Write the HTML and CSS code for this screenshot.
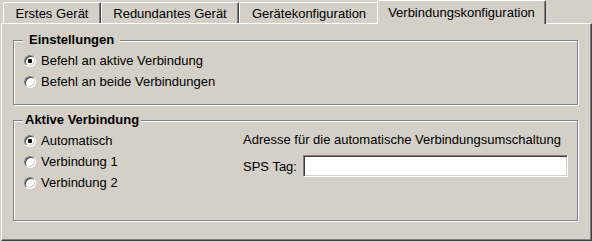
FILE: index.html
```html
<!DOCTYPE html>
<html lang="de">
<head>
  <meta charset="UTF-8" />
  <title>Verbindungskonfiguration</title>
  <link rel="stylesheet" href="styles.css">
</head>
<body>
  <div class="dialog">
    <div class="tabs">
      <div class="tab tab-first">Erstes Gerät</div>
      <div class="tab tab-redundant">Redundantes Gerät</div>
      <div class="tab tab-config">Gerätekonfiguration</div>
      <div class="tab tab-connection active">Verbindungskonfiguration</div>
    </div>

    <div class="panel">
      <div class="group">
        <div class="legend legend-wide">Einstellungen</div>
        <div class="group-body">
          <div class="options">
            <label class="option"><input type="radio" name="command" checked>Befehl an aktive Verbindung</label>
            <label class="option"><input type="radio" name="command">Befehl an beide Verbindungen</label>
          </div>
        </div>
      </div>

      <div class="group group-connection">
        <div class="legend">Aktive Verbindung</div>
        <div class="group-body">
          <div class="options modes">
            <label class="option"><input type="radio" name="mode" checked>Automatisch</label>
            <label class="option"><input type="radio" name="mode">Verbindung 1</label>
            <label class="option"><input type="radio" name="mode">Verbindung 2</label>
          </div>
          <div class="address">
            <div>Adresse für die automatische Verbindungsumschaltung</div>
            <div class="tag-row">
              <label for="sps-tag">SPS Tag:</label>
              <input type="text" id="sps-tag">
            </div>
          </div>
        </div>
      </div>
    </div>
  </div>
</body>
</html>
```

FILE: styles.css
```css
* {
  margin: 0;
  padding: 0;
  box-sizing: border-box;
}
body {
  background-color: #d4d0c8;
  color: #000;
  font-family: "Liberation Sans", Arial, sans-serif;
  font-size: 13px;
  line-height: 15px;
}
.dialog {
  padding-left: 1px;
}

/* tab strip */
.tabs {
  display: flex;
  align-items: flex-end;
  height: 23px;
  padding-left: 2px;
}
.tab {
  height: 21px;
  padding-top: 3px;
  text-align: center;
  white-space: nowrap;
  background: #d4d0c8;
  border: 1px solid;
  border-bottom: none;
  border-color: #fff #404040 transparent #fff;
  border-radius: 2px 2px 0 0;
  box-shadow: inset -1px 0 #808080;
}
.tab-first {
  width: 98px;
}
.tab-redundant {
  width: 138px;
}
.tab-config {
  width: 140px;
}
.tab-connection {
  width: 165px;
}
.tab.active {
  width: 169px;
  height: 24px;
  padding-top: 4px;
  margin: 0 -2px -1px;
  position: relative;
  z-index: 1;
}

/* page */
.panel {
  height: 218px;
  padding: 16px 13px 0 11px;
  border: 1px solid;
  border-color: #fff #404040 #404040 #fff;
  box-shadow: inset -1px -1px #808080;
}
.group {
  padding: 0 9px 15px 10px;
  border: 1px solid #808080;
  box-shadow: inset 1px 1px #fff, 1px 1px #fff;
}
.group + .group {
  margin-top: 15px;
}
.group-connection {
  padding-bottom: 30px;
}
.legend {
  width: max-content;
  margin: -9px 0 0 -1px;
  padding: 0 2px;
  background: #d4d0c8;
  font-weight: bold;
}
.legend-wide {
  padding: 0 6px;
}
.group-body {
  display: flex;
  padding-top: 6px;
}
.options {
  display: flex;
  flex-direction: column;
  gap: 6px;
}
.modes {
  width: 219px;
}
.option {
  display: flex;
  align-items: center;
  gap: 5px;
  white-space: nowrap;
}
input[type="radio"] {
  appearance: none;
  width: 12px;
  height: 12px;
  border-radius: 50%;
  border: 1px solid;
  border-color: #808080 #fff #fff #808080;
  box-shadow: inset 1px 1px #404040, inset -1px -1px #d4d0c8;
  background: #fff;
}
input[type="radio"]:checked {
  background: radial-gradient(circle, #000 0 2px, #fff 2.5px);
}
.address {
  flex: 1;
  margin-top: -1px;
}
.tag-row {
  display: flex;
  align-items: center;
  margin-top: 8px;
}
.tag-row label {
  width: 60px;
}
.tag-row input {
  flex: 1;
  height: 22px;
  border: 1px solid;
  border-color: #808080 #fff #fff #808080;
  box-shadow: inset 1px 1px #404040, inset -1px -1px #d4d0c8;
  background: #fff;
  font: inherit;
}
```
